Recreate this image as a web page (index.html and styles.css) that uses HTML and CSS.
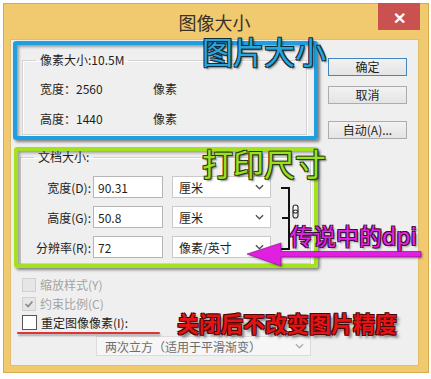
FILE: index.html
```html
<!DOCTYPE html>
<html>
<head>
  <meta charset="utf-8">
  <meta name="viewport" content="width=device-width">
  <title>图像大小</title>
  <link rel="stylesheet" href="styles.css">
</head>
<body>

  <div class="window">
    <div class="titlebar">图像大小</div>
    <div class="close">&#x2715;</div>

    <div class="client">
      <div class="main">
        <fieldset class="grp grp-px">
          <legend>像素大小:10.5M</legend>
          <div class="info-row"><span class="lbl">宽度：</span><span class="val">2560</span><span>像素</span></div>
          <div class="info-row"><span class="lbl">高度：</span><span class="val">1440</span><span>像素</span></div>
        </fieldset>

        <fieldset class="grp grp-doc">
          <legend>文档大小:</legend>
          <div class="field-row">
            <label>宽度(D):</label>
            <input class="num" type="text" value="90.31">
            <div class="drop"><span>厘米</span><svg class="chev" viewBox="0 0 10 6"><path d="M1 1l4 4 4-4" /></svg></div>
          </div>
          <div class="field-row">
            <label>高度(G):</label>
            <input class="num" type="text" value="50.8">
            <div class="drop"><span>厘米</span><svg class="chev" viewBox="0 0 10 6"><path d="M1 1l4 4 4-4" /></svg></div>
          </div>
          <div class="field-row">
            <label>分辨率(R):</label>
            <input class="num" type="text" value="72">
            <div class="drop"><span>像素/英寸</span><svg class="chev" viewBox="0 0 10 6"><path d="M1 1l4 4 4-4" /></svg></div>
          </div>
        </fieldset>

        <div class="checks">
          <div class="check off"><span class="box"></span>缩放样式(Y)</div>
          <div class="check off"><span class="box"><svg viewBox="0 0 14 14"><path d="M3 7l3 3 5-6" /></svg></span>约束比例(C)</div>
          <div class="check"><span class="box white"></span>重定图像像素(I):</div>
        </div>

        <div class="resample">
          <span>两次立方（适用于平滑渐变）</span>
          <svg class="chev" viewBox="0 0 10 6"><path d="M1 1l4 4 4-4" /></svg>
        </div>
      </div>

      <div class="side">
        <button class="btn default">确定</button>
        <button class="btn">取消</button>
        <button class="btn auto">自动(A)...</button>
      </div>
    </div>
  </div>

  <!-- annotations drawn over the dialog -->
  <div class="mark mark-blue"></div>
  <div class="mark mark-green"></div>
  <div class="note note-blue">图片大小</div>
  <div class="note note-green">打印尺寸</div>
  <div class="note note-pink">传说中的dpi</div>
  <div class="note note-red">关闭后不改变图片精度</div>

  <svg class="bracket" width="24" height="70" viewBox="0 0 24 70">
    <path d="M1 2h8v61h-8M2 32h7" fill="none" stroke="#111" stroke-width="2" />
    <rect x="13" y="19" width="5" height="8" rx="2.5" fill="#fff" stroke="#333" stroke-width="1.2" />
    <rect x="13" y="24" width="5" height="8" rx="2.5" fill="none" stroke="#333" stroke-width="1.2" />
  </svg>

  <svg class="arrow" width="180" height="30" viewBox="0 0 180 30">
    <path d="M2 14l34-11v8.5h140v5.5h-140v9z" fill="#e01fe0" stroke="#7a117a" stroke-width="0.6" />
  </svg>

  <div class="underline"></div>

</body>
</html>
```

FILE: styles.css
```css
body {
  margin: 0;
  width: 431px;
  height: 379px;
  overflow: hidden;
  position: relative;
  background: #fff;
  font-family: "Noto Sans CJK SC", "Liberation Sans", sans-serif;
  font-size: 12px;
  color: #1e1e1e;
}

/* window frame */
.window {
  position: relative;
  margin: 3px 0 0 3px;
  width: 426px;
  height: 370px;
  box-sizing: border-box;
  background: #f1c96f;
  border: 1px solid #d9aa4c;
  padding: 0 10px 7px 7px;
  display: flex;
  flex-direction: column;
}
.titlebar {
  height: 36px;
  display: flex;
  justify-content: center;
  align-items: center;
  font-size: 18px;
  line-height: 20px;
  color: #3a3128;
}
.close {
  position: absolute;
  top: -1px;
  right: 8px;
  width: 42px;
  height: 27px;
  background: #c9514f;
  color: #fff;
  font-size: 16px;
  font-weight: bold;
  display: flex;
  justify-content: center;
  align-items: center;
}
.client {
  flex: 1;
  background: #efefef;
  box-shadow: 0 0 0 1px #e0bd6c;
  display: flex;
}

/* left column */
.main {
  width: 289px;
  padding: 12px 0 0 11px;
}
.grp {
  margin: 0;
  padding: 0 0 0 13px;
  border: 1px solid #d3d3d3;
  box-shadow: inset 1px 1px 0 #fff, 1px 1px 0 #fff;
}
.grp legend {
  padding: 0 4px;
  line-height: 16px;
}
.grp-px {
  width: 270px;
  padding-top: 6px;
}
.info-row {
  display: flex;
  line-height: 30px;
  padding-left: 4px;
}
.info-row .lbl {
  width: 36px;
}
.info-row .val {
  width: 77px;
}
.grp-doc {
  margin: 14px 0 0 -2px;
  width: 276px;
  padding-top: 11px;
  padding-bottom: 5px;
  display: flex;
  flex-direction: column;
  gap: 8px;
}
.field-row {
  display: flex;
  align-items: center;
  height: 22px;
}
.field-row label {
  width: 57px;
  text-align: right;
  margin-right: 2px;
  white-space: nowrap;
}
.num {
  width: 70px;
  height: 22px;
  box-sizing: border-box;
  border: 1px solid #b5b5b5;
  background: #fff;
  padding: 0 4px;
  font: inherit;
  color: #1e1e1e;
}
.drop {
  margin-left: 9px;
  width: 99px;
  height: 22px;
  box-sizing: border-box;
  border: 1px solid #c9c9c9;
  background: #fff;
  display: flex;
  align-items: center;
  justify-content: space-between;
  padding: 0 6px 0 6px;
}
.chev {
  width: 9px;
  height: 6px;
  fill: none;
  stroke: #555;
  stroke-width: 1.6;
}

.checks {
  margin-top: 11px;
}
.check {
  display: flex;
  align-items: center;
  height: 19px;
  gap: 4px;
}
.check.off {
  color: #a3a3a3;
}
.box {
  width: 14px;
  height: 14px;
  box-sizing: border-box;
  border: 1px solid #d0d0d0;
  background: #e6e6e6;
}
.box svg {
  display: block;
  width: 12px;
  height: 12px;
  fill: none;
  stroke: #8a8a8a;
  stroke-width: 2;
}
.box.white {
  width: 15px;
  height: 15px;
  background: #fff;
  border-color: #555;
}
.resample {
  margin: 4px 0 0 74px;
  width: 215px;
  height: 20px;
  box-sizing: border-box;
  border: 1px solid #dcdcdc;
  background: #f6f6f6;
  color: #6d6d6d;
  display: flex;
  align-items: center;
  justify-content: space-between;
  padding: 0 6px 0 8px;
}
.resample .chev {
  stroke: #b0b0b0;
}

/* right column */
.side {
  margin-left: 17px;
  padding-top: 18px;
  display: flex;
  flex-direction: column;
}
.btn {
  width: 79px;
  height: 18px;
  padding: 0;
  border: 1px solid #acacac;
  background: linear-gradient(#f2f2f2, #e4e4e4);
  font: inherit;
  line-height: 16px;
  color: #1e1e1e;
  margin-bottom: 10px;
}
.btn.default {
  border-color: #3f86c2;
}
.btn.auto {
  margin-top: 7px;
}

/* annotations */
.mark {
  position: absolute;
  box-sizing: border-box;
  border-radius: 3px;
  box-shadow: 2px 2px 3px rgba(0, 0, 0, 0.45), inset 2px 2px 3px rgba(0, 0, 0, 0.35);
}
.mark-blue {
  left: 13px;
  top: 41px;
  width: 305px;
  height: 99px;
  border: 4px solid #1f9fdf;
}
.mark-green {
  left: 14px;
  top: 147px;
  width: 304px;
  height: 121px;
  border: 4px solid #a3e21e;
}
.note {
  position: absolute;
  white-space: nowrap;
  line-height: 1;
}
.note-blue {
  left: 202px;
  top: 35px;
  font-size: 31px;
  color: #2aa6df;
  text-shadow: -1px -1px 0 #142b3a, 1px -1px 0 #142b3a, -1px 1px 0 #142b3a, 1px 1px 0 #142b3a, 2px 2px 2px rgba(0, 0, 0, 0.5);
}
.note-green {
  left: 202px;
  top: 147px;
  font-size: 31px;
  color: #9ae023;
  text-shadow: -1px -1px 0 #2c3a12, 1px -1px 0 #2c3a12, -1px 1px 0 #2c3a12, 1px 1px 0 #2c3a12, 2px 2px 2px rgba(0, 0, 0, 0.5);
}
.note-pink {
  left: 290px;
  top: 224px;
  font-size: 23px;
  color: #e524e5;
  text-shadow: -1px -1px 0 #3a0c3a, 1px -1px 0 #3a0c3a, -1px 1px 0 #3a0c3a, 1px 1px 0 #3a0c3a, 2px 2px 2px rgba(0, 0, 0, 0.4);
}
.note-red {
  left: 177px;
  top: 311px;
  font-size: 22px;
  font-weight: bold;
  color: #e41414;
  text-shadow: -1px -1px 0 #4a0707, 1px -1px 0 #4a0707, -1px 1px 0 #4a0707, 1px 1px 0 #4a0707, 3px 3px 3px rgba(0, 0, 0, 0.55);
}
.bracket {
  position: absolute;
  left: 280px;
  top: 186px;
}
.arrow {
  position: absolute;
  left: 245px;
  top: 240px;
  filter: drop-shadow(1px 1px 1px rgba(0, 0, 0, 0.4));
}
.underline {
  position: absolute;
  left: 17px;
  top: 332px;
  width: 143px;
  height: 2px;
  background: #e03434;
  border-radius: 1px;
  box-shadow: 1px 2px 2px rgba(0, 0, 0, 0.3);
}
```
